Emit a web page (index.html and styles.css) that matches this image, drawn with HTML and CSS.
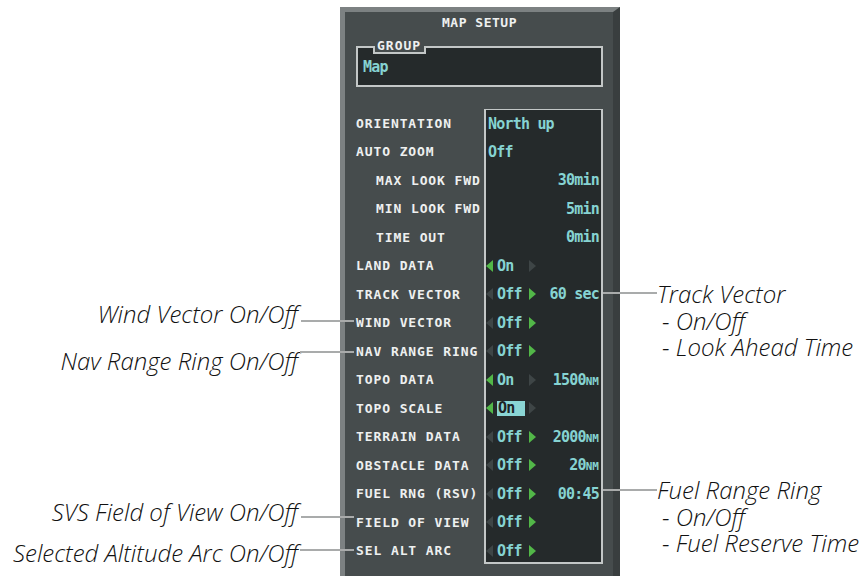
FILE: index.html
```html
<!DOCTYPE html>
<html lang="en">
<head>
    <meta charset="UTF-8">
    <meta name="viewport" content="width=device-width, initial-scale=1.0">
    <title>Map Setup</title>
    <link rel="stylesheet" href="styles.css">
</head>
<body>

<div class="page">

    <!-- MAP SETUP window -->
    <div class="panel">
        <div class="panel-title">MAP SETUP</div>

        <div class="group-box">
            <div class="group-legend">GROUP</div>
            <span class="val">Map</span>
        </div>

        <div class="setup">
            <div class="labels">
                <div class="row">ORIENTATION</div>
                <div class="row">AUTO ZOOM</div>
                <div class="row sub">MAX LOOK FWD</div>
                <div class="row sub">MIN LOOK FWD</div>
                <div class="row sub">TIME OUT</div>
                <div class="row">LAND DATA</div>
                <div class="row">TRACK VECTOR</div>
                <div class="row">WIND VECTOR</div>
                <div class="row">NAV RANGE RING</div>
                <div class="row">TOPO DATA</div>
                <div class="row">TOPO SCALE</div>
                <div class="row">TERRAIN DATA</div>
                <div class="row">OBSTACLE DATA</div>
                <div class="row">FUEL RNG (RSV)</div>
                <div class="row">FIELD OF VIEW</div>
                <div class="row">SEL ALT ARC</div>
            </div>

            <div class="values">
                <div class="row"><span class="val">North up</span></div>
                <div class="row"><span class="val">Off</span></div>
                <div class="row"><span class="val extra">30min</span></div>
                <div class="row"><span class="val extra">5min</span></div>
                <div class="row"><span class="val extra">0min</span></div>

                <div class="row">
                    <span class="arr-l on"></span><span class="val tog">On</span><span class="arr-r"></span>
                </div>
                <div class="row">
                    <span class="arr-l"></span><span class="val tog">Off</span><span class="arr-r on"></span>
                    <span class="val extra">60 sec</span>
                </div>
                <div class="row">
                    <span class="arr-l"></span><span class="val tog">Off</span><span class="arr-r on"></span>
                </div>
                <div class="row">
                    <span class="arr-l"></span><span class="val tog">Off</span><span class="arr-r on"></span>
                </div>
                <div class="row">
                    <span class="arr-l on"></span><span class="val tog">On</span><span class="arr-r"></span>
                    <span class="val extra">1500<small>NM</small></span>
                </div>
                <div class="row">
                    <span class="arr-l on"></span><span class="val tog"><span class="sel">On</span></span><span class="arr-r"></span>
                </div>
                <div class="row">
                    <span class="arr-l"></span><span class="val tog">Off</span><span class="arr-r on"></span>
                    <span class="val extra">2000<small>NM</small></span>
                </div>
                <div class="row">
                    <span class="arr-l"></span><span class="val tog">Off</span><span class="arr-r on"></span>
                    <span class="val extra">20<small>NM</small></span>
                </div>
                <div class="row">
                    <span class="arr-l"></span><span class="val tog">Off</span><span class="arr-r on"></span>
                    <span class="val extra">00:45</span>
                </div>
                <div class="row">
                    <span class="arr-l"></span><span class="val tog">Off</span><span class="arr-r on"></span>
                </div>
                <div class="row">
                    <span class="arr-l"></span><span class="val tog">Off</span><span class="arr-r on"></span>
                </div>
            </div>
        </div>
    </div>

    <!-- callouts around the window -->
    <div class="note left note-wind">Wind Vector On/Off</div>
    <div class="note left note-nav">Nav Range Ring On/Off</div>
    <div class="note left note-svs">SVS Field of View On/Off</div>
    <div class="note left note-alt">Selected Altitude Arc On/Off</div>

    <div class="note right note-track">
        <div>Track Vector</div>
        <div class="dash">- On/Off</div>
        <div class="dash">- Look Ahead Time</div>
    </div>
    <div class="note right note-fuel">
        <div>Fuel Range Ring</div>
        <div class="dash">- On/Off</div>
        <div class="dash">- Fuel Reserve Time</div>
    </div>

    <div class="lead lead-wind"></div>
    <div class="lead lead-nav"></div>
    <div class="lead lead-svs"></div>
    <div class="lead lead-alt"></div>
    <div class="lead lead-track"></div>
    <div class="lead lead-fuel"></div>

</div>

</body>
</html>
```

FILE: styles.css
```css
body {
    margin: 0;
    background: #fff;
    overflow: hidden;
}

.page {
    position: relative;
    width: 859px;
    height: 576px;
    overflow: hidden;
}

/* window */
.panel {
    box-sizing: border-box;
    width: 280px;
    height: 600px;
    margin: 7px 0 0 340px;
    padding: 0 10px 0 11px;
    background: #464c4d;
    border-left: 5px solid #7c8182;
    border-top: 5px solid #7c8182;
    border-right: 7px solid #393e3f;
    font-family: "DejaVu Sans Mono", monospace;
    font-weight: bold;
    color: #eef0f0;
}

.panel-title {
    height: 22px;
    line-height: 22px;
    text-align: center;
    font-size: 13px;
    letter-spacing: 0.5px;
}

.group-box {
    position: relative;
    box-sizing: border-box;
    height: 41px;
    margin-top: 12px;
    padding: 9px 5px 0;
    background: #252a2b;
    border: 2px solid #c3c7c7;
}

.group-legend {
    position: absolute;
    left: 15px;
    top: -9px;
    width: 53px;
    height: 15px;
    box-sizing: border-box;
    padding-left: 4px;
    line-height: 13px;
    font-size: 13px;
    letter-spacing: 1px;
    background:
        linear-gradient(#c3c7c7, #c3c7c7) left bottom / 2px 8px no-repeat,
        linear-gradient(#c3c7c7, #c3c7c7) right bottom / 2px 8px no-repeat,
        linear-gradient(#c3c7c7, #c3c7c7) left bottom / 100% 2px no-repeat,
        #464c4d;
}

.setup {
    display: flex;
    margin-top: 22px;
}

.labels {
    width: 128px;
    font-size: 13px;
    letter-spacing: 0.9px;
}

.labels .sub {
    padding-left: 20px;
}

.values {
    box-sizing: border-box;
    width: 119px;
    height: 455px;
    padding: 0 2px 0 0;
    background: #252a2b;
    border: 2px solid #c3c7c7;
    border-top-width: 1px;
}

.row {
    display: flex;
    align-items: center;
    height: 28.5px;
    white-space: nowrap;
}

.labels .row:first-child,
.values .row:first-child {
    height: 27.5px;
}
.labels .row:first-child {
    margin-top: 1px;
}

.val {
    color: #86d3d2;
    font-size: 15px;
    letter-spacing: -0.8px;
}

.values .row > .val:first-child {
    padding-left: 2px;
}

.val small {
    font-size: 11px;
    letter-spacing: 0;
}

.extra {
    margin-left: auto;
}

.tog {
    box-sizing: border-box;
    width: 36px;
    padding-left: 4px;
}

.sel {
    display: inline-block;
    width: 27px;
    height: 15px;
    line-height: 15px;
    padding-left: 1px;
    background: #8ad5d4;
    color: #1d2324;
}

/* selection arrows */
.arr-l, .arr-r {
    width: 0;
    height: 0;
    border-top: 6px solid transparent;
    border-bottom: 6px solid transparent;
}
.arr-l {
    border-right: 7px solid #3e4546;
}
.arr-r {
    border-left: 7px solid #3e4546;
}
.arr-l.on {
    border-right-color: #52b748;
}
.arr-r.on {
    border-left-color: #52b748;
}

/* callouts */
.note {
    position: absolute;
    font-family: "Open Sans", sans-serif;
    font-style: italic;
    font-weight: 300;
    font-size: 24px;
    line-height: 26.5px;
    color: #111;
    white-space: nowrap;
}

.note.left {
    right: 561px;
}

.note-wind { top: 301px; }
.note-nav { top: 348px; }
.note-svs { top: 499px; }
.note-alt { top: 540px; }

.note.right {
    left: 657px;
}

.note .dash {
    padding-left: 5px;
}

.note-track { top: 281px; }
.note-fuel { top: 477px; }

.lead {
    position: absolute;
    height: 2px;
    background: #a9abab;
}

.lead-wind { left: 301px; width: 53px; top: 320px; }
.lead-nav { left: 300px; width: 54px; top: 351px; }
.lead-svs { left: 301px; width: 53px; top: 516px; }
.lead-alt { left: 300px; width: 54px; top: 549px; }
.lead-track { left: 603px; width: 54px; top: 292px; }
.lead-fuel { left: 603px; width: 54px; top: 489px; }
```
